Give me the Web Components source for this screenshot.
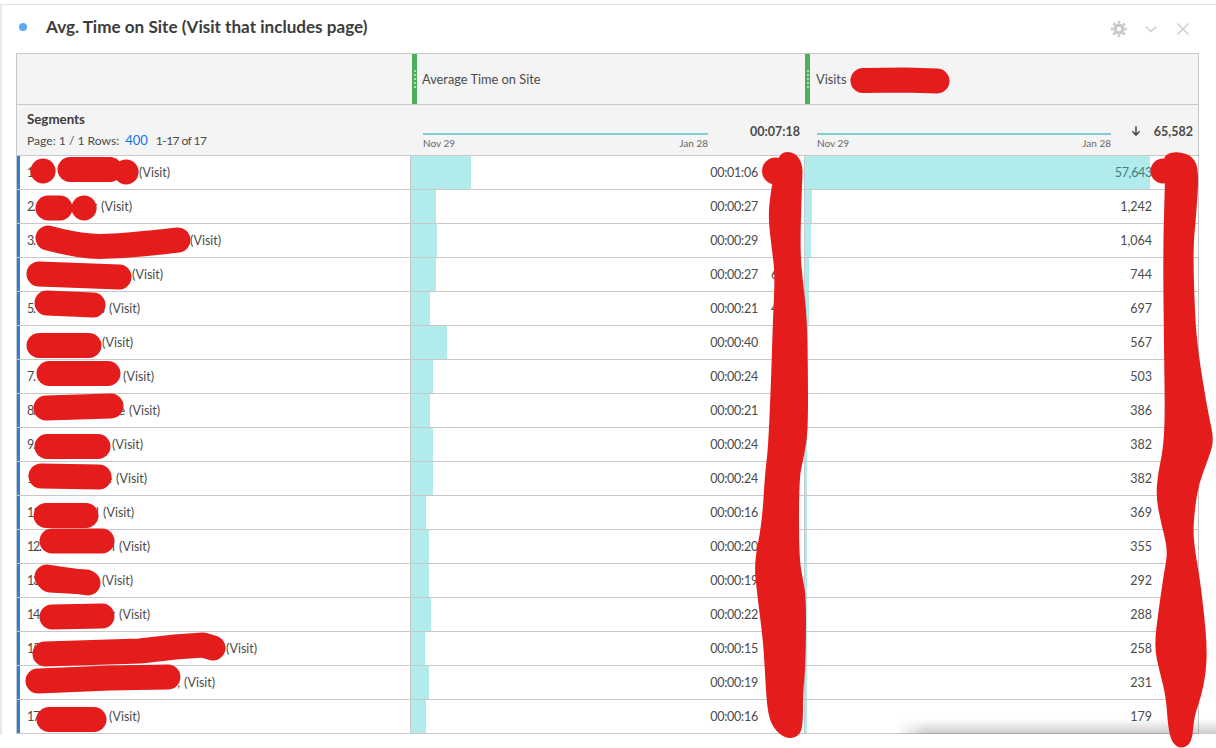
<!DOCTYPE html>
<html>
<head>
<meta charset="utf-8">
<style>
  html, body { margin: 0; background: #fff; }
  body { width: 1216px; height: 748px; overflow: hidden; position: relative; font-family: Lato, "Noto Sans", sans-serif; color: #4b4b4b; }
</style>
</head>
<body>
<report-panel heading="Avg. Time on Site (Visit that includes page)">
  <freeform-table></freeform-table>
</report-panel>
<redaction-marks></redaction-marks>

<script>
// Table content, top to bottom
const ROWS = [
  { n: '1.',  visitX: 139, t: '00:01:06', tw: 60, v: '57,643', vw: 345 },
  { n: '2.',  visitX: 101, tail: 'r', t: '00:00:27', tw: 25, v: '1,242', vw: 7 },
  { n: '3.',  visitX: 190, t: '00:00:29', tw: 26, v: '1,064', vw: 6 },
  { n: '4.',  visitX: 132, t: '00:00:27', tw: 25, v: '744', vw: 4, peek: '6' },
  { n: '5.',  visitX: 109, tail: 's', t: '00:00:21', tw: 19, v: '697', vw: 4, peek: '4' },
  { n: '6.',  visitX: 102, t: '00:00:40', tw: 36, v: '567', vw: 3 },
  { n: '7.',  visitX: 123, t: '00:00:24', tw: 22, v: '503', vw: 3 },
  { n: '8.',  visitX: 129, tail: 'e', t: '00:00:21', tw: 19, v: '386', vw: 2 },
  { n: '9.',  visitX: 112, t: '00:00:24', tw: 22, v: '382', vw: 2 },
  { n: '10.', visitX: 116, tail: 'e', t: '00:00:24', tw: 22, v: '382', vw: 2 },
  { n: '11.', visitX: 103, tail: 'l', t: '00:00:16', tw: 15, v: '369', vw: 2 },
  { n: '12.', visitX: 119, tail: 'l', t: '00:00:20', tw: 18, v: '355', vw: 2 },
  { n: '13.', visitX: 102, t: '00:00:19', tw: 18, v: '292', vw: 2 },
  { n: '14.', visitX: 119, tail: 'r', t: '00:00:22', tw: 20, v: '288', vw: 2 },
  { n: '15.', visitX: 226, t: '00:00:15', tw: 14, v: '258', vw: 2 },
  { n: '16.', visitX: 184, tail: ',', t: '00:00:19', tw: 18, v: '231', vw: 2 },
  { n: '17.', visitX: 109, t: '00:00:16', tw: 15, v: '179', vw: 2 }
];

class ReportPanel extends HTMLElement {
  constructor() {
    super();
    this.attachShadow({ mode: 'open' });
  }

  connectedCallback() {
    this.shadowRoot.innerHTML = `
      <style>
        :host {
          display: block;
          box-sizing: border-box;
          margin-top: 4px;
          height: 731px;
          border-top: 1px solid #e3e3e3;
          border-left: 2px solid #e8e8e8;
          padding-right: 17px;
          padding-left: 14px;
        }
        header {
          height: 48px;
          display: flex;
          align-items: center;
          padding-bottom: 5px;
          box-sizing: border-box;
        }
        .dot {
          width: 8px;
          height: 8px;
          border-radius: 50%;
          background: #5ea9f5;
          margin-left: 3px;
          margin-right: 19px;
        }
        h1 {
          margin: 0;
          font-size: 17.1px;
          font-weight: 700;
          color: #3c3c3c;
          flex: 1;
        }
        .tools {
          display: flex;
          gap: 16px;
          margin-right: 8px;
          margin-top: 5px;
        }
        svg { display: block; width: 16px; height: 16px; }
      </style>
      <header>
        <span class="dot"></span>
        <h1>${this.getAttribute('heading')}</h1>
        <div class="tools">
          <svg viewBox="0 0 16 16">
            <circle cx="8" cy="8" r="5.6" fill="#c9c9c9"/>
            <circle cx="8" cy="8" r="6.8" fill="none" stroke="#c9c9c9" stroke-width="2.4" stroke-dasharray="2.7 2.64" stroke-dashoffset="1.35"/>
            <circle cx="8" cy="8" r="2.2" fill="#fff"/>
          </svg>
          <svg viewBox="0 0 16 16"><path d="M2.5 5.5 8 10.5l5.5-5" fill="none" stroke="#cfcfcf" stroke-width="1.6"/></svg>
          <svg viewBox="0 0 16 16"><path d="M2.5 2.5l11 11M13.5 2.5l-11 11" fill="none" stroke="#cfcfcf" stroke-width="1.6"/></svg>
        </div>
      </header>
      <slot></slot>
    `;
  }
}

class MetricHead extends HTMLElement {
  constructor() {
    super();
    this.attachShadow({ mode: 'open' });
  }

  connectedCallback() {
    this.shadowRoot.innerHTML = `
      <style>
        :host {
          display: flex;
          align-items: center;
          height: 50px;
          font-size: 12.8px;
          color: #4b4b4b;
        }
        .handle {
          width: 5px;
          height: 100%;
          margin-left: var(--nudge, 1px);
          margin-right: var(--after, 5px);
          background: #4caf5c;
          display: flex;
          flex-direction: column;
          align-items: center;
          justify-content: center;
          gap: 2px;
        }
        .handle i {
          width: 2px;
          height: 2px;
          border-radius: 50%;
          background: #cfe9d2;
        }
      </style>
      <div class="handle"><i></i><i></i><i></i><i></i><i></i></div>
      <slot></slot>
    `;
  }
}

class SparkTotal extends HTMLElement {
  constructor() {
    super();
    this.attachShadow({ mode: 'open' });
  }

  connectedCallback() {
    const arrow = this.hasAttribute('sorted')
      ? `<svg viewBox="0 0 10 10" width="12" height="12"><path d="M5 1v7M2 5.2 5 8.4l3-3.2" fill="none" stroke="#4b4b4b" stroke-width="1.3"/></svg>`
      : '';
    this.shadowRoot.innerHTML = `
      <style>
        :host {
          display: flex;
          box-sizing: border-box;
          height: 50px;
          padding: 0 5px 0 12px;
        }
        .spark {
          width: var(--spark, 285px);
          margin-top: 28px;
        }
        .line { height: 2px; background: #7fd1d1; }
        .dates {
          display: flex;
          justify-content: space-between;
          font-size: 10px;
          line-height: 12px;
          margin-top: 2px;
          color: #666;
        }
        .total {
          flex: 1;
          display: flex;
          justify-content: flex-end;
          align-items: center;
          gap: 12px;
          height: 14px;
          margin-top: 19px;
          font-size: 12.5px;
          font-weight: 700;
          color: #4b4b4b;
        }
      </style>
      <div class="spark">
        <div class="line"></div>
        <div class="dates"><span>Nov 29</span><span>Jan 28</span></div>
      </div>
      <div class="total">${arrow}<span>${this.getAttribute('total')}</span></div>
    `;
  }
}

class FreeformRow extends HTMLElement {
  constructor() {
    super();
    this.attachShadow({ mode: 'open' });
  }

  set data(row) {
    const first = row.vw > 100;
    this.shadowRoot.innerHTML = `
      <style>
        :host {
          display: grid;
          grid-template-columns: 394px 394px 1fr;
          height: 34px;
          box-sizing: border-box;
          border-bottom: 1px solid #c8c8c8;
          font-size: 12.5px;
          color: #4b4b4b;
        }
        .cell {
          display: flex;
          align-items: center;
          box-sizing: border-box;
          background: linear-gradient(#b2ebeb, #b2ebeb) no-repeat left top / var(--w, 0) 100%;
        }
        .label {
          border-left: 3px solid #2f7ed8;
          border-right: 1px solid #c8c8c8;
          padding-left: 7px;
        }
        .name {
          display: flex;
          justify-content: space-between;
          box-sizing: border-box;
          padding-right: 4px;
          width: ${row.visitX - 27}px;
        }
        .idx { letter-spacing: -1.2px; }
        .num { justify-content: flex-end; padding-right: 46px; border-right: 1px solid #c8c8c8; }
        .num.time { position: relative; letter-spacing: -.25px; }
        .peek { position: absolute; left: 360px; }
        .num.count { border-right: 0; }
        .hot { color: #3d8080; letter-spacing: -.3px; }
      </style>
      <div class="cell label"><div class="name"><span class="idx">${row.n}</span><span>${row.tail || ''}</span></div><span>(Visit)</span></div>
      <div class="cell num time" style="--w:${row.tw}px"><span>${row.t}</span>${row.peek ? `<span class="peek">${row.peek}</span>` : ''}</div>
      <div class="cell num count" style="--w:${row.vw}px"><span class="${first ? 'hot' : ''}">${row.v}</span></div>
    `;
  }
}

class FreeformTable extends HTMLElement {
  constructor() {
    super();
    this.attachShadow({ mode: 'open' });
  }

  connectedCallback() {
    this.shadowRoot.innerHTML = `
      <style>
        :host {
          display: block;
          border: 1px solid #c8c8c8;
          border-bottom: 0;
          position: relative;
        }
        .head {
          display: grid;
          grid-template-columns: 394px 394px 1fr;
          background: #f4f4f4;
          border-bottom: 1px solid #c8c8c8;
        }
        .title { padding-left: 10px; padding-top: 6px; box-sizing: border-box; height: 50px; font-size: 12.1px; color: #4b4b4b; }
        .title b { display: block; font-size: 13.3px; color: #3c3c3c; line-height: 16px; }
        .pager { display: flex; align-items: baseline; margin-top: 5px; line-height: 16px; }
        .pager a { color: #1473e6; font-size: 13px; margin: 0 8px 0 6px; }
        .pager .range { letter-spacing: -.6px; }
        .shade {
          position: absolute;
          left: 879px;
          right: -18px;
          bottom: 0;
          height: 15px;
          background: linear-gradient(rgba(120,120,120,0), rgba(120,120,120,.38));
          -webkit-mask-image: linear-gradient(90deg, transparent, #000 30px);
          mask-image: linear-gradient(90deg, transparent, #000 30px);
        }
      </style>
      <div class="head">
        <div></div>
        <metric-head>Average Time on Site</metric-head>
        <metric-head style="--nudge:0px;--after:6px">Visits -</metric-head>
      </div>
      <div class="head">
        <div class="title">
          <b>Segments</b>
          <div class="pager"><span>Page: 1 / 1 Rows:</span><a>400</a><span class="range">1-17 of 17</span></div>
        </div>
        <spark-total total="00:07:18"></spark-total>
        <spark-total total="65,582" sorted style="--spark:294px"></spark-total>
      </div>
      <div id="rows"></div>
      <div class="shade"></div>
    `;
    const holder = this.shadowRoot.getElementById('rows');
    ROWS.forEach(row => {
      const el = document.createElement('freeform-row');
      holder.appendChild(el);
      el.data = row;
    });
  }
}

// The red marker strokes someone painted over the screenshot
class RedactionMarks extends HTMLElement {
  constructor() {
    super();
    this.attachShadow({ mode: 'open' });
  }

  connectedCallback() {
    const strokes = [
      'M863 80.5 905 80 937 81',
      'M43 171h.1', 'M70 169.5h40', 'M126 172h.1',
      'M48 208h12', 'M84 208h.1',
      'M48 238 Q 70 244 90 246 T 178 240',
      'M39 274 119 277',
      'M47 303 93 305',
      'M39 345.5H89',
      'M49 373.5H108',
      'M46 408 111 406',
      'M47 446.5H98',
      'M41 476 99 477',
      'M46 515.5H86',
      'M52 541H102',
      'M47 577 88 583', 'M50 580 86 582',
      'M52 617 102 616',
      'M45 654 140 651 175 647 203 645 213 648',
      'M38 681 110 678 168 677',
      'M49 719.5H94'
    ];
    const midCol = [
      [775,170],[771,190],[768,217],[772,250],[775,275],[773,317],[771,383],[768,450],[765,473],[762,523],[754,563],[757,593],
      [763,640],[765,673],[767,707],[771,724],[780,735],[790,739],[800,735],[803,723],[803,693],[805,673],[806,640],[806,597],[803,580],
      [799,557],[799,480],[803,460],[807,440],[808,417],[808,383],[807,317],[803,283],[800,250],[802,183],[803,165],[795,152],[780,152]
    ];
    const rightCol = [
      [1165,170],[1165,182],[1163,250],[1164,350],[1165,417],[1163,450],[1158,473],[1156,497],[1161,523],[1168,550],[1164,573],
      [1159,607],[1154,647],[1160,673],[1166,697],[1168,727],[1172,743],[1181,749],[1192,743],[1194,717],[1201,697],[1206,673],[1207,647],
      [1204,613],[1200,580],[1196,557],[1193,533],[1195,507],[1199,483],[1209,457],[1214,440],[1209,417],[1203,383],
      [1198,350],[1195,317],[1193,250],[1196,217],[1199,173],[1194,157],[1178,151],[1163,155]
    ];
    const shape = pts => {
      // closed outline through the midpoints of the points, so the edge stays soft
      const mid = (a, b) => `${(a[0] + b[0]) / 2} ${(a[1] + b[1]) / 2}`;
      let d = `M${mid(pts[pts.length - 1], pts[0])}`;
      pts.forEach((p, i) => { d += `Q${p[0]} ${p[1]} ${mid(p, pts[(i + 1) % pts.length])}`; });
      return d + 'Z';
    };
    this.shadowRoot.innerHTML = `
      <style>
        :host { position: absolute; left: 0; top: 0; width: 1216px; height: 748px; pointer-events: none; }
        svg { display: block; }
      </style>
      <svg width="1216" height="748" fill="none" stroke="#e51c1c" stroke-width="25" stroke-linecap="round" stroke-linejoin="round">
        ${strokes.map(d => `<path d="${d}"/>`).join('')}
        <path d="M775.5 171h.1" stroke-width="27"/>
        <path d="M1163 171h.1" stroke-width="25"/>
        <path d="${shape(midCol)}" fill="#e51c1c" stroke="none"/>
        <path d="${shape(rightCol)}" fill="#e51c1c" stroke="none"/>
      </svg>
    `;
  }
}

customElements.define('report-panel', ReportPanel);
customElements.define('metric-head', MetricHead);
customElements.define('spark-total', SparkTotal);
customElements.define('freeform-row', FreeformRow);
customElements.define('freeform-table', FreeformTable);
customElements.define('redaction-marks', RedactionMarks);
</script>
</body>
</html>
